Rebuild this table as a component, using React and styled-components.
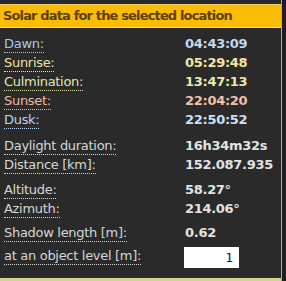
import React from "react";
import styled, { createGlobalStyle } from "styled-components";

const Global = createGlobalStyle`
  html, body {
    margin: 0;
    padding: 0;
    background: #1f1f1f;
  }
  body {
    font-family: "DejaVu Sans", Verdana, sans-serif;
  }
`;

const Frame = styled.div`
  width: 286px;
  height: 281px;
  background: #1f1f1f;
  display: flex;
`;

const Panel = styled.div`
  width: 282px;
  height: 281px;
  box-sizing: border-box;
  background: #2a2a2a;
  border-right: 1px solid #a9a9a4;
  display: flex;
  flex-direction: column;
  padding-top: 4px;
`;

const Header = styled.div`
  height: 24px;
  box-sizing: border-box;
  background: #fbbc06;
  border-top: 1px solid #f6d46a;
  border-bottom: 1px solid #f3df96;
  color: #5b4100;
  font-weight: bold;
  font-size: 13px;
  letter-spacing: -0.85px;
  line-height: 22px;
  padding-left: 3px;
  white-space: nowrap;
`;

const Body = styled.div`
  flex: 1;
  display: flex;
  flex-direction: column;
  padding: 6px 0 0 4px;
  background: #2a2a2a;
  border-bottom: 3px solid #d5d38e;
`;

const Group = styled.div`
  display: flex;
  flex-direction: column;
  gap: ${(p) => p.$gap || 0}px;
  margin-bottom: ${(p) => p.$after || 0}px;
`;

const Row = styled.div`
  display: grid;
  grid-template-columns: 181px auto;
  align-items: start;
  font-size: 13px;
  line-height: 19px;
`;

const Label = styled.span`
  justify-self: start;
  color: ${(p) => p.$color};
  line-height: 17px;
  margin-top: 1px;
  letter-spacing: -0.3px;
  border-bottom: 1px dotted ${(p) => p.$color};
  white-space: nowrap;
`;

const Value = styled.span`
  color: ${(p) => p.$color};
  font-weight: bold;
  letter-spacing: -0.3px;
  white-space: nowrap;
`;

const LevelInput = styled.input`
  width: 55px;
  height: 21px;
  box-sizing: border-box;
  margin: 1px 0 0 -1px;
  border: none;
  background: #ffffff;
  color: #222;
  font-family: "DejaVu Sans Mono", monospace;
  font-size: 13px;
  text-align: right;
  padding: 0 6px 0 0;
  outline: none;
`;

const GRAY = "#d6d6d6";

const times = [
  { label: "Dawn:", value: "04:43:09", l: "#a9c9ea", v: "#c5d7ee" },
  { label: "Sunrise:", value: "05:29:48", l: "#efe0a6", v: "#f1e6a0" },
  { label: "Culmination:", value: "13:47:13", l: "#e0e6ae", v: "#e9e9a9" },
  { label: "Sunset:", value: "22:04:20", l: "#e8b8a2", v: "#f0c2aa" },
  { label: "Dusk:", value: "22:50:52", l: "#b6d4f4", v: "#cbe0f8" },
];

export default function App() {
  return (
    <>
      <Global />
      <Frame>
        <Panel>
          <Header>Solar data for the selected location</Header>
          <Body>
            <Group $after={7}>
              {times.map((t) => (
                <Row key={t.label}>
                  <Label $color={t.l}>{t.label}</Label>
                  <Value $color={t.v}>{t.value}</Value>
                </Row>
              ))}
            </Group>
            <Group $after={6}>
              <Row>
                <Label $color={GRAY}>Daylight duration:</Label>
                <Value $color="#e2e2e2">16h34m32s</Value>
              </Row>
              <Row>
                <Label $color={GRAY}>Distance [km]:</Label>
                <Value $color="#e2e2e2">152.087.935</Value>
              </Row>
            </Group>
            <Group $after={5}>
              <Row>
                <Label $color={GRAY}>Altitude:</Label>
                <Value $color="#e2e2e2">58.27°</Value>
              </Row>
              <Row>
                <Label $color={GRAY}>Azimuth:</Label>
                <Value $color="#e2e2e2">214.06°</Value>
              </Row>
            </Group>
            <Group $gap={4}>
              <Row>
                <Label $color={GRAY}>Shadow length [m]:</Label>
                <Value $color="#e2e2e2">0.62</Value>
              </Row>
              <Row>
                <Label $color={GRAY}>at an object level [m]:</Label>
                <LevelInput defaultValue="1" />
              </Row>
            </Group>
          </Body>
        </Panel>
      </Frame>
    </>
  );
}
